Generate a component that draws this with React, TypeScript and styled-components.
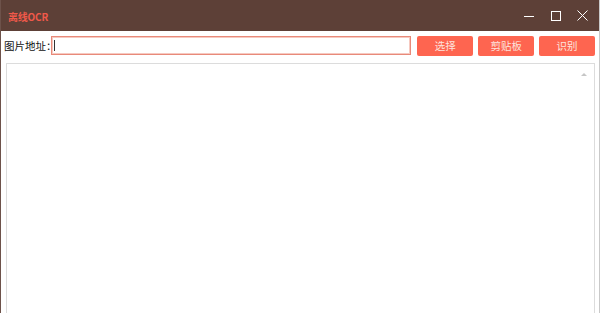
import React from 'react'
import styled, { createGlobalStyle } from 'styled-components'

const Global = createGlobalStyle`
  html, body {
    margin: 0;
    padding: 0;
    background: #ffffff;
  }
  body {
    font-family: "Noto Sans CJK SC", "Liberation Sans", sans-serif;
  }
`

const Window = styled.div`
  width: 600px;
  height: 313px;
  display: flex;
  flex-direction: column;
  box-sizing: border-box;
  border-left: 1px solid #6d524a;
  border-right: 1px solid #c9c9c9;
  overflow: hidden;
  background: #ffffff;
`

const TitleBar = styled.div`
  height: 31px;
  flex: none;
  display: flex;
  align-items: center;
  background: #5d4037;
  padding-left: 7px;
`

const Title = styled.div`
  flex: 1;
  color: #f0594a;
  font-family: "Noto Sans CJK SC", sans-serif;
  font-weight: 700;
  font-size: 10px;
  letter-spacing: -0.2px;
  padding-top: 2px;
`

const Controls = styled.div`
  display: flex;
  height: 100%;
`

const Ctrl = styled.div`
  width: 27px;
  height: 100%;
  display: flex;
  align-items: center;
  justify-content: center;
`

const Row = styled.div`
  display: flex;
  align-items: center;
  height: 29px;
  flex: none;
  padding: 0 4px 0 3px;
`

const Label = styled.span`
  font-size: 10.5px;
  color: #111;
  white-space: nowrap;
  width: 47px;
  overflow: visible;
`

const Input = styled.div`
  width: 356px;
  height: 15px;
  border: 2px solid #f6c9c0;
  outline: 1px solid #e88a7a;
  outline-offset: -1px;
  display: flex;
  align-items: center;
  padding-left: 1px;
  box-sizing: content-box;
`

const Caret = styled.div`
  width: 1px;
  height: 11px;
  background: #333;
`

const Button = styled.div`
  width: 56px;
  height: 20px;
  margin-left: ${(p: { $gap: number }) => p.$gap}px;
  background: #fe6550;
  border-radius: 2px;
  color: #fde3de;
  font-size: 10.5px;
  display: flex;
  align-items: center;
  justify-content: center;
`

const Area = styled.div`
  flex: 1;
  margin: 3px 4px 0 5px;
  border: 1px solid #dcdcdc;
  border-bottom: none;
  position: relative;
`

const ScrollUp = styled.div`
  position: absolute;
  right: 7px;
  top: 9px;
  width: 0;
  height: 0;
  border-left: 3px solid transparent;
  border-right: 3px solid transparent;
  border-bottom: 3px solid #c6c6c6;
`

export default function App() {
  return (
    <>
      <Global />
      <Window>
        <TitleBar>
          <Title>离线OCR</Title>
          <Controls>
            <Ctrl>
              <svg width="10" height="10" viewBox="0 0 10 10">
                <path d="M0 5.5h10" stroke="#ffffff" strokeWidth="1" />
              </svg>
            </Ctrl>
            <Ctrl>
              <svg width="10" height="10" viewBox="0 0 10 10">
                <rect x="0.5" y="0.5" width="9" height="9" fill="none" stroke="#ffffff" strokeWidth="1" />
              </svg>
            </Ctrl>
            <Ctrl style={{ marginRight: 3 }}>
              <svg width="11" height="11" viewBox="0 0 11 11">
                <path d="M0.5 0.5l10 10M10.5 0.5l-10 10" stroke="#ffffff" strokeWidth="1" />
              </svg>
            </Ctrl>
          </Controls>
        </TitleBar>
        <Row>
          <Label>图片地址：</Label>
          <Input>
            <Caret />
          </Input>
          <Button $gap={6}>选择</Button>
          <Button $gap={5}>剪贴板</Button>
          <Button $gap={5}>识别</Button>
        </Row>
        <Area>
          <ScrollUp />
        </Area>
      </Window>
    </>
  )
}
